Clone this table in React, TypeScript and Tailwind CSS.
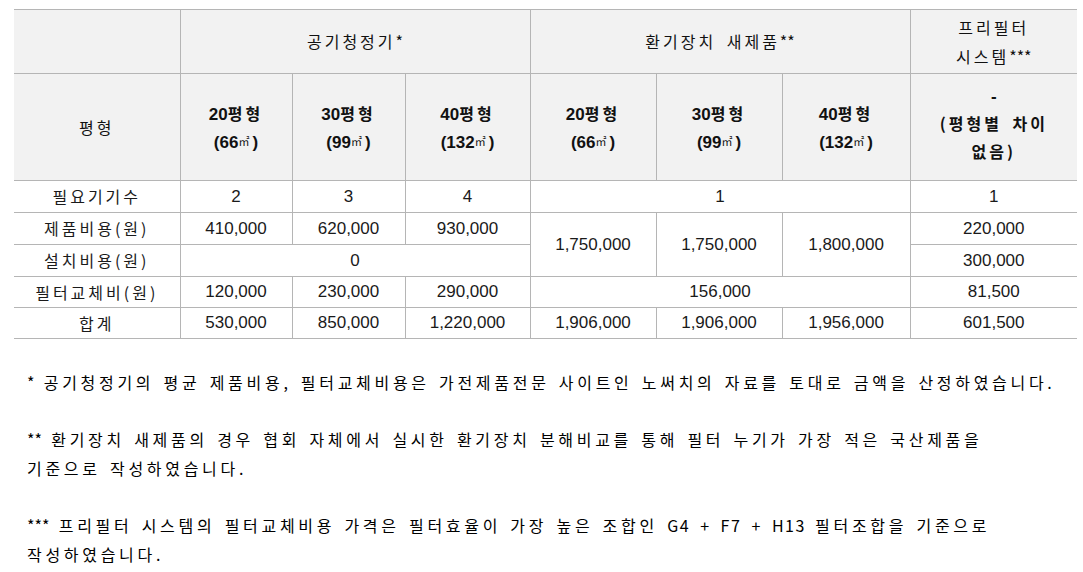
import React from "react";

const ko = "font-['Noto_Sans_CJK_KR',sans-serif]";
const num = "font-['Liberation_Sans','Noto_Sans_CJK_KR',sans-serif] text-[17px]";

const cell = "border border-[#b5b5b5] text-center align-middle p-0";
const head = `${cell} bg-[#f2f2f2] text-[#111]`;

function Size({ n, m }: { n: string; m: string }) {
  return (
    <>
      <span className="font-bold">
        <span className="font-['Liberation_Sans',sans-serif] text-[17px]">{n}</span>
        <span className={`${ko} text-[16px] tracking-[3px]`}>평형</span>
      </span>
      <br />
      <span className="font-['Liberation_Sans',sans-serif] text-[17px] font-bold">
        ({m}
        <span className={`${ko} text-[11px] font-normal align-[2px]`}>㎡</span>
        <span className="ml-[3px]">)</span>
      </span>
    </>
  );
}

function Label({ children }: { children: React.ReactNode }) {
  return <span className={`${ko} text-[16px] tracking-[3px]`}>{children}</span>;
}

function Stars({ n }: { n: string }) {
  return <span className="tracking-normal">{n}</span>;
}

export default function App() {
  const rowH = "h-[32px]";
  return (
    <div className="min-h-screen bg-white pl-[14px] pt-[9px] text-[#1a1a1a]">
      <table className="w-[1063px] table-fixed border-collapse border-x-0 [&_tr>*:first-child]:border-l-0 [&_tr>*:last-child]:border-r-0">
        <colgroup>
          <col className="w-[166px]" />
          <col className="w-[112px]" />
          <col className="w-[113px]" />
          <col className="w-[125px]" />
          <col className="w-[126px]" />
          <col className="w-[126px]" />
          <col className="w-[128px]" />
          <col className="w-[167px]" />
        </colgroup>
        <thead>
          {/* top header */}
          <tr className="h-[64px]">
            <th className={head}></th>
            <th colSpan={3} className={`${head} font-normal`}>
              <Label>
                공기청정기<Stars n="*" />
              </Label>
            </th>
            <th colSpan={3} className={`${head} font-normal`}>
              <span className={`${ko} text-[16px] tracking-[3px] [word-spacing:4px]`}>
                환기장치 새제품<Stars n="**" />
              </span>
            </th>
            <th className={`${head} font-normal leading-[28px]`}>
              <Label>
                프리필터
                <br />
                시스템<Stars n="***" />
              </Label>
            </th>
          </tr>
          {/* size header */}
          <tr className="h-[107px]">
            <th className={`${head} font-normal`}>
              <Label>평형</Label>
            </th>
            <th className={`${head} leading-[26px] pt-[1px]`}>
              <Size n="20" m="66" />
            </th>
            <th className={`${head} leading-[26px] pt-[1px]`}>
              <Size n="30" m="99" />
            </th>
            <th className={`${head} leading-[26px] pt-[1px]`}>
              <Size n="40" m="132" />
            </th>
            <th className={`${head} leading-[26px] pt-[1px]`}>
              <Size n="20" m="66" />
            </th>
            <th className={`${head} leading-[26px] pt-[1px]`}>
              <Size n="30" m="99" />
            </th>
            <th className={`${head} leading-[26px] pt-[1px]`}>
              <Size n="40" m="132" />
            </th>
            <th className={`${head} leading-[27px] pb-[6px]`}>
              <span className="font-['Liberation_Sans',sans-serif] text-[17px] font-bold">-</span>
              <br />
              <span className={`${ko} text-[16px] tracking-[3px] [word-spacing:4px] font-bold`}>
                (평형별 차이
                <br />
                없음)
              </span>
            </th>
          </tr>
        </thead>
        <tbody>
          <tr className={rowH}>
            <td className={cell}><Label>필요기기수</Label></td>
            <td className={cell}><span className={num}>2</span></td>
            <td className={cell}><span className={num}>3</span></td>
            <td className={cell}><span className={num}>4</span></td>
            <td colSpan={3} className={cell}><span className={num}>1</span></td>
            <td className={cell}><span className={num}>1</span></td>
          </tr>
          <tr className={rowH}>
            <td className={cell}><Label>제품비용(원)</Label></td>
            <td className={cell}><span className={num}>410,000</span></td>
            <td className={cell}><span className={num}>620,000</span></td>
            <td className={cell}><span className={num}>930,000</span></td>
            <td rowSpan={2} className={cell}><span className={num}>1,750,000</span></td>
            <td rowSpan={2} className={cell}><span className={num}>1,750,000</span></td>
            <td rowSpan={2} className={cell}><span className={num}>1,800,000</span></td>
            <td className={cell}><span className={num}>220,000</span></td>
          </tr>
          <tr className={rowH}>
            <td className={cell}><Label>설치비용(원)</Label></td>
            <td colSpan={3} className={cell}><span className={num}>0</span></td>
            <td className={cell}><span className={num}>300,000</span></td>
          </tr>
          <tr className="h-[31px]">
            <td className={cell}><Label>필터교체비(원)</Label></td>
            <td className={cell}><span className={num}>120,000</span></td>
            <td className={cell}><span className={num}>230,000</span></td>
            <td className={cell}><span className={num}>290,000</span></td>
            <td colSpan={3} className={cell}><span className={num}>156,000</span></td>
            <td className={cell}><span className={num}>81,500</span></td>
          </tr>
          <tr className="h-[31px]">
            <td className={cell}><Label>합계</Label></td>
            <td className={cell}><span className={num}>530,000</span></td>
            <td className={cell}><span className={num}>850,000</span></td>
            <td className={cell}><span className={num}>1,220,000</span></td>
            <td className={cell}><span className={num}>1,906,000</span></td>
            <td className={cell}><span className={num}>1,906,000</span></td>
            <td className={cell}><span className={num}>1,956,000</span></td>
            <td className={cell}><span className={num}>601,500</span></td>
          </tr>
        </tbody>
      </table>

      {/* footnotes */}
      <div className={`${ko} pl-[13px] pt-[28.7px] text-[16px] leading-[28.7px] tracking-[3.7px] [word-spacing:2px] text-black whitespace-nowrap`}>
        <p>
          <Stars n="*" /> 공기청정기의 평균 제품비용, 필터교체비용은 가전제품전문 사이트인 노써치의 자료를 토대로 금액을 산정하였습니다.
        </p>
        <p className="mt-[28.7px]">
          <Stars n="**" /> 환기장치 새제품의 경우 협회 자체에서 실시한 환기장치 분해비교를 통해 필터 누기가 가장 적은 국산제품을
          <br />
          기준으로 작성하였습니다.
        </p>
        <p className="mt-[28.7px]">
          <Stars n="***" /> 프리필터 시스템의 필터교체비용 가격은 필터효율이 가장 높은 조합인{" "}
          <span className="tracking-[1.5px] [word-spacing:5px]">G4 + F7 + H13</span> 필터조합을 기준으로
          <br />
          작성하였습니다.
        </p>
      </div>
    </div>
  );
}
